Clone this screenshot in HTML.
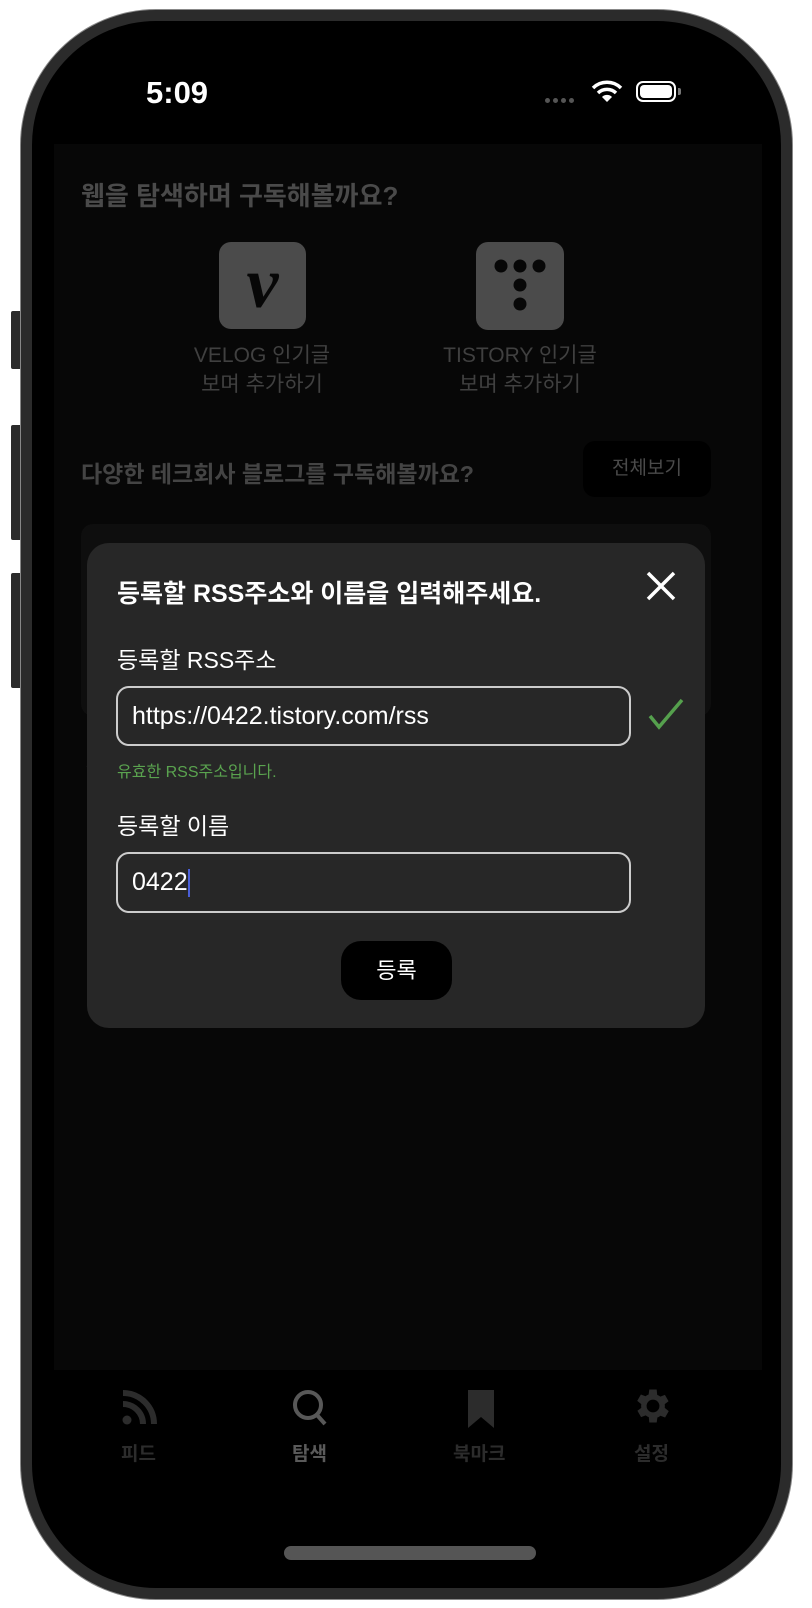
<!DOCTYPE html>
<html><head><meta charset="utf-8"><style>
*{margin:0;padding:0;box-sizing:border-box}
body{width:812px;height:1608px;background:#fff;position:relative;overflow:hidden;font-family:"Liberation Sans","Noto Sans CJK KR",sans-serif}
.abs{position:absolute}
.frame{left:21px;top:10px;width:771px;height:1589px;border-radius:135px;background:#2b2b2b;box-shadow:0 0 0 1px #888}
.screen{left:32px;top:21px;width:749px;height:1567px;border-radius:124px;background:#000;overflow:hidden}
.btn{background:#2b2b2b;border-radius:2px}
.t{white-space:nowrap}
</style></head><body>
<div class="abs btn" style="left:11px;top:311px;width:12px;height:58px"></div>
<div class="abs btn" style="left:11px;top:425px;width:12px;height:115px"></div>
<div class="abs btn" style="left:11px;top:573px;width:12px;height:115px"></div>
<div class="abs btn" style="left:771px;top:503px;width:10px;height:186px"></div>
<div class="abs frame"></div>
<div class="abs screen"></div>
<!-- status -->
<div class="abs t" style="left:146px;top:75px;font-size:31px;font-weight:bold;color:#fff">5:09</div>
<div class="abs" style="left:545px;top:98px;display:flex;gap:3px"><i style="width:5px;height:5px;border-radius:3px;background:#555;display:block"></i><i style="width:5px;height:5px;border-radius:3px;background:#555;display:block"></i><i style="width:5px;height:5px;border-radius:3px;background:#555;display:block"></i><i style="width:5px;height:5px;border-radius:3px;background:#555;display:block"></i></div>
<svg class="abs" style="left:591px;top:80px" width="32" height="24" viewBox="0 0 32 24"><path d="M2 8 A20 20 0 0 1 30 8" stroke="#fff" stroke-width="3.5" fill="none"/><path d="M7 13 A13 13 0 0 1 25 13" stroke="#fff" stroke-width="3.5" fill="none"/><path d="M16 22 L11 17 A7 7 0 0 1 21 17Z" fill="#fff"/></svg>
<div class="abs" style="left:636px;top:81px;width:40px;height:21px;border:2px solid #fff;border-radius:7px;padding:2px"><div style="width:100%;height:100%;background:#fff;border-radius:4px"></div></div>
<div class="abs" style="left:678px;top:88px;width:3px;height:7px;background:#777;border-radius:0 2px 2px 0"></div>
<!-- content dim -->
<div class="abs" style="left:54px;top:144px;width:708px;height:1226px;background:#070707"></div>
<div class="abs t" style="left:81px;top:176px;font-size:26px;font-weight:bold;color:#4a4a4a">웹을 탐색하며 구독해볼까요?</div>
<div class="abs" style="left:219px;top:242px;width:87px;height:87px;border-radius:12px;background:#4b4b4b;text-align:center;font:italic bold 72px 'Liberation Serif',serif;color:#070707;line-height:82px">v</div>
<svg class="abs" style="left:476px;top:242px" width="88" height="88"><rect width="88" height="88" rx="12" fill="#4b4b4b"/><g fill="#070707"><circle cx="25" cy="24" r="6.5"/><circle cx="44" cy="24" r="6.5"/><circle cx="63" cy="24" r="6.5"/><circle cx="44" cy="43" r="6.5"/><circle cx="44" cy="62" r="6.5"/></g></svg>
<div class="abs t" style="left:162px;top:341px;width:200px;text-align:center;font-size:21px;line-height:29px;color:#404040">VELOG 인기글<br>보며 추가하기</div>
<div class="abs t" style="left:420px;top:341px;width:200px;text-align:center;font-size:21px;line-height:29px;color:#404040">TISTORY 인기글<br>보며 추가하기</div>
<div class="abs t" style="left:81px;top:455px;font-size:23px;font-weight:bold;color:#444">다양한 테크회사 블로그를 구독해볼까요?</div>
<div class="abs t" style="left:583px;top:441px;width:128px;height:56px;border-radius:12px;background:#000;color:#4a4a4a;font-size:19px;line-height:56px;text-align:center">전체보기</div>
<div class="abs" style="left:81px;top:524px;width:630px;height:192px;border-radius:12px;background:#0e0e0e"></div>
<div class="abs t" style="left:84px;top:750px;font-size:16px;color:#333">ㅈ</div>
<!-- tab bar -->
<div class="abs" style="left:54px;top:1370px;width:708px;height:150px;background:#000"></div>
<svg class="abs" style="left:119px;top:1388px" width="40" height="40" viewBox="0 0 40 40"><circle cx="8" cy="32" r="4.5" fill="#2c2c2c"/><path d="M4 16a20 20 0 0 1 20 20" stroke="#2c2c2c" stroke-width="6" fill="none"/><path d="M4 5a31 31 0 0 1 31 31" stroke="#2c2c2c" stroke-width="6" fill="none"/></svg>
<div class="abs t" style="left:121px;top:1439px;font-size:19px;font-weight:bold;color:#2c2c2c">피드</div>
<svg class="abs" style="left:290px;top:1388px" width="42" height="42" viewBox="0 0 42 42"><circle cx="18" cy="17" r="13" stroke="#585858" stroke-width="4" fill="none"/><path d="M27 27l8 9" stroke="#585858" stroke-width="4"/></svg>
<div class="abs t" style="left:292px;top:1439px;font-size:19px;font-weight:bold;color:#5a5a5a">탐색</div>
<svg class="abs" style="left:466px;top:1390px" width="30" height="40" viewBox="0 0 30 40"><path d="M2 0h26v38l-13-11-13 11z" fill="#2c2c2c"/></svg>
<div class="abs t" style="left:453px;top:1439px;font-size:19px;font-weight:bold;color:#2c2c2c">북마크</div>
<svg class="abs" style="left:631px;top:1384px" width="44" height="44" viewBox="0 0 24 24"><path fill="#2c2c2c" d="M19.4 13a7.5 7.5 0 0 0 0-2l2.1-1.6-2-3.5-2.5 1a7 7 0 0 0-1.7-1L15 3h-4l-.4 2.7a7 7 0 0 0-1.7 1l-2.5-1-2 3.5L6.6 11a7.5 7.5 0 0 0 0 2l-2.1 1.6 2 3.5 2.5-1a7 7 0 0 0 1.7 1L11 21h4l.4-2.7a7 7 0 0 0 1.7-1l2.5 1 2-3.5zM13 15.5a3.5 3.5 0 1 1 0-7 3.5 3.5 0 0 1 0 7z" transform="translate(-1 0)"/></svg>
<div class="abs t" style="left:634px;top:1439px;font-size:19px;font-weight:bold;color:#2c2c2c">설정</div>
<div class="abs" style="left:284px;top:1546px;width:252px;height:14px;border-radius:7px;background:#555"></div>
<!-- modal -->
<div class="abs" style="left:87px;top:543px;width:618px;height:485px;border-radius:22px;background:#272727"></div>
<div class="abs t" style="left:117px;top:574px;font-size:25px;font-weight:bold;color:#fff">등록할 RSS주소와 이름을 입력해주세요.</div>
<svg class="abs" style="left:645px;top:570px" width="32" height="32" viewBox="0 0 32 32"><path d="M3 3L29 29M29 3L3 29" stroke="#fff" stroke-width="3.5"/></svg>
<div class="abs t" style="left:117px;top:641px;font-size:23px;color:#fff">등록할 RSS주소</div>
<div class="abs t" style="left:116px;top:686px;width:515px;height:60px;border:2px solid #ccc;border-radius:13px;color:#fff;font-size:25px;line-height:56px;padding-left:14px">https://0422.tistory.com/rss</div>
<svg class="abs" style="left:648px;top:698px" width="36" height="32" viewBox="0 0 36 32"><path d="M2 18l9 11L34 2" stroke="#55a04d" stroke-width="3.5" fill="none"/></svg>
<div class="abs t" style="left:117px;top:758px;font-size:16px;color:#5aa34f">유효한 RSS주소입니다.</div>
<div class="abs t" style="left:117px;top:807px;font-size:23px;color:#fff">등록할 이름</div>
<div class="abs t" style="left:116px;top:852px;width:515px;height:61px;border:2px solid #ccc;border-radius:13px;color:#fff;font-size:25px;line-height:57px;padding-left:14px">0422<span style="display:inline-block;width:2px;height:28px;background:#4a5fd8;vertical-align:middle"></span></div>
<div class="abs t" style="left:341px;top:941px;width:111px;height:59px;border-radius:20px;background:#000;color:#fff;font-size:22px;line-height:59px;text-align:center">등록</div>
</body></html>
